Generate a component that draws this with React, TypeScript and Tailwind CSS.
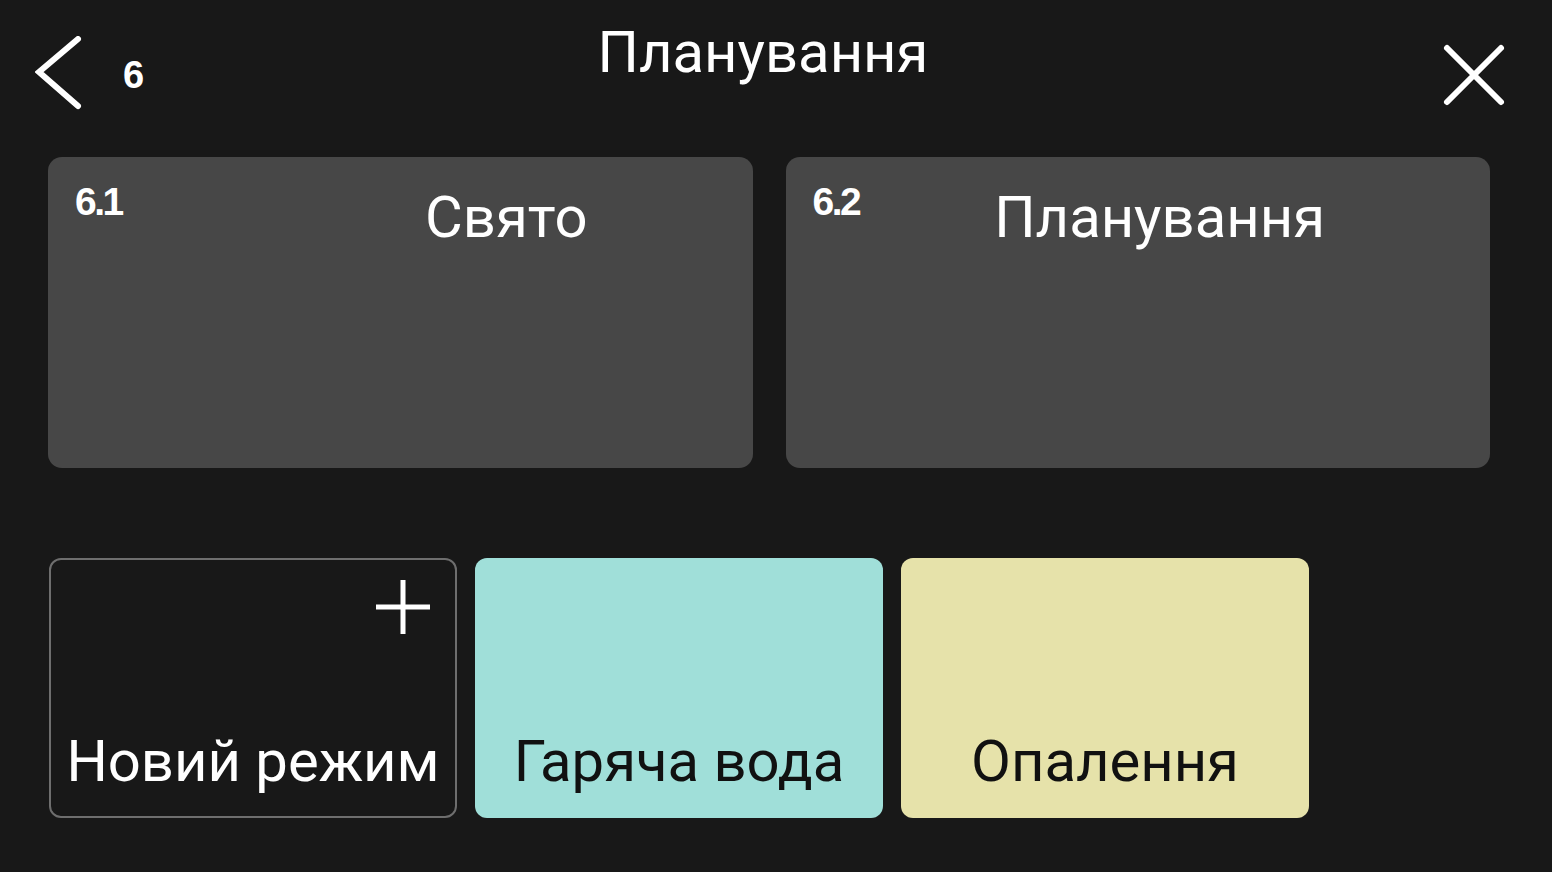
import React from "react";

const sans = "font-['Roboto','Noto_Sans',sans-serif]";
const arial = "font-['Liberation_Sans',Arial,sans-serif]";

const ChevronLeft: React.FC = () => (
  <svg width="48" height="74" viewBox="0 0 48 74" fill="none" className="text-white">
    <path d="M43 3 L4 36 L43 70" stroke="currentColor" strokeWidth="6" strokeLinecap="round" strokeLinejoin="miter" />
  </svg>
);

const CloseIcon: React.FC = () => (
  <svg width="64" height="64" viewBox="0 0 64 64" fill="none" className="text-white">
    <path d="M5 5 L59 59 M59 5 L5 59" stroke="currentColor" strokeWidth="6" strokeLinecap="round" />
  </svg>
);

const PlusIcon: React.FC = () => (
  <svg width="56" height="56" viewBox="0 0 56 56" fill="none" className="text-white">
    <path d="M28 1 V55 M1 28 H55" stroke="currentColor" strokeWidth="5" />
  </svg>
);

interface ModeCardProps {
  code: string;
  title: string;
}

const ModeCard: React.FC<ModeCardProps> = ({ code, title }) => (
  <div className="flex-1 h-[311px] rounded-[14px] bg-[#474747] relative flex items-start justify-end pr-[165px] pt-[31px]">
    <span className={`absolute left-[27px] top-[25px] text-[39px] leading-none font-bold tracking-[-2.5px] text-white ${arial}`}>
      {code}
    </span>
    <span className={`text-[58px] leading-none text-white ${sans}`}>{title}</span>
  </div>
);

const App: React.FC = () => {
  return (
    <div className="w-[1552px] h-[872px] bg-[#181818] pl-[48px] pr-[62px] overflow-hidden">
      {/* Header */}
      <div className="grid grid-cols-[1fr_auto_1fr] h-[157px]">
        <div className="flex items-start">
          <div className="ml-[-13px] mt-[36px]">
            <ChevronLeft />
          </div>
          <span className={`ml-[40px] mt-[56px] text-[38px] leading-none font-bold text-white ${arial}`}>6</span>
        </div>
        <h1 className={`pr-[12px] pt-[23px] text-[58px] leading-none font-normal text-white ${sans}`}>
          Планування
        </h1>
        <div className="flex justify-end items-start">
          <button className="mt-[43px] mr-[-16px]">
            <CloseIcon />
          </button>
        </div>
      </div>

      {/* Modes */}
      <div className="flex gap-[33px]">
        <ModeCard code="6.1" title="Свято" />
        <ModeCard code="6.2" title="Планування" />
      </div>

      {/* Schedules */}
      <div className="flex gap-[18px] mt-[90px] ml-[1px]">
        <div className="w-[408px] h-[260px] rounded-[12px] border-2 border-[#6e6e6e] bg-[#181818] flex flex-col justify-between items-center pb-[26px]">
          <div className="self-end mt-[19px] mr-[24px]">
            <PlusIcon />
          </div>
          <span className={`text-[58px] leading-none text-white ${sans}`}>Новий режим</span>
        </div>
        <div className="w-[408px] h-[260px] rounded-[12px] bg-[#a0dfd9] flex items-end justify-center pb-[28px]">
          <span className={`text-[58px] leading-none text-[#111] ${sans}`}>Гаряча вода</span>
        </div>
        <div className="w-[408px] h-[260px] rounded-[12px] bg-[#e6e2aa] flex items-end justify-center pb-[28px]">
          <span className={`text-[58px] leading-none text-[#111] ${sans}`}>Опалення</span>
        </div>
      </div>
    </div>
  );
};

export default App;
